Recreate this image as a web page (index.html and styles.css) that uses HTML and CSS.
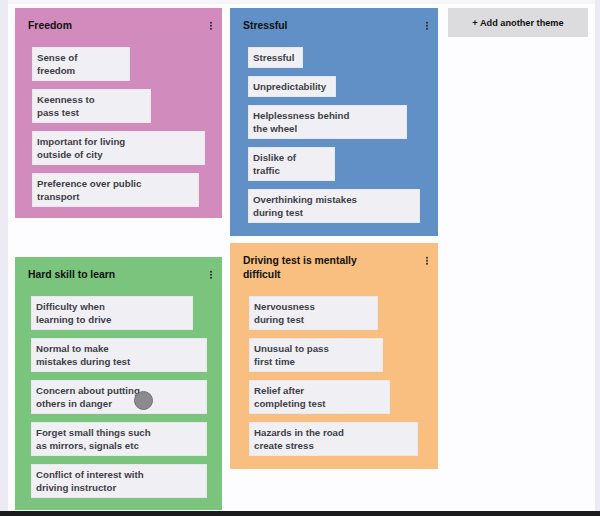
FILE: index.html
```html
<!DOCTYPE html>
<html>
<head>
<meta charset="utf-8">
<link rel="stylesheet" href="styles.css">
</head>
<body>
<div class="screen">
  <div class="main">
    <div class="strip-left"></div>
    <div class="board">
      <div class="col col-1">
        <section class="card pink">
          <header class="card-head"><h2 class="title">Freedom</h2><svg class="kebab" viewBox="0 0 4 10" width="4" height="10"><circle cx="2" cy="1.7" r="1"/><circle cx="2" cy="4.7" r="1"/><circle cx="2" cy="7.7" r="1"/></svg></header>
          <div class="items off-17">
            <div class="note" style="width:98px">Sense of<br>freedom</div>
            <div class="note" style="width:119px">Keenness to<br>pass test</div>
            <div class="note" style="width:173px">Important for living<br>outside of city</div>
            <div class="note" style="width:167px">Preference over public<br>transport</div>
          </div>
        </section>
        <section class="card green second-1">
          <header class="card-head"><h2 class="title">Hard skill to learn</h2><svg class="kebab" viewBox="0 0 4 10" width="4" height="10"><circle cx="2" cy="1.7" r="1"/><circle cx="2" cy="4.7" r="1"/><circle cx="2" cy="7.7" r="1"/></svg></header>
          <div class="items off-16">
            <div class="note" style="width:162px">Difficulty when<br>learning to drive</div>
            <div class="note" style="width:176px">Normal to make<br>mistakes during test</div>
            <div class="note" style="width:176px">Concern about putting<br>others in danger</div>
            <div class="note" style="width:176px">Forget small things such<br>as mirrors, signals etc</div>
            <div class="note" style="width:176px">Conflict of interest with<br>driving instructor</div>
          </div>
        </section>
      </div>
      <div class="col col-2">
        <section class="card blue">
          <header class="card-head"><h2 class="title">Stressful</h2><svg class="kebab" viewBox="0 0 4 10" width="4" height="10"><circle cx="2" cy="1.7" r="1"/><circle cx="2" cy="4.7" r="1"/><circle cx="2" cy="7.7" r="1"/></svg></header>
          <div class="items off-18">
            <div class="note" style="width:55px">Stressful</div>
            <div class="note" style="width:88px">Unpredictability</div>
            <div class="note" style="width:159px">Helplessness behind<br>the wheel</div>
            <div class="note" style="width:87px">Dislike of<br>traffic</div>
            <div class="note" style="width:172px">Overthinking mistakes<br>during test</div>
          </div>
        </section>
        <section class="card orange second-2">
          <header class="card-head"><h2 class="title">Driving test is mentally<br>difficult</h2><svg class="kebab" viewBox="0 0 4 10" width="4" height="10"><circle cx="2" cy="1.7" r="1"/><circle cx="2" cy="4.7" r="1"/><circle cx="2" cy="7.7" r="1"/></svg></header>
          <div class="items off-19">
            <div class="note" style="width:129px">Nervousness<br>during test</div>
            <div class="note" style="width:134px">Unusual to pass<br>first time</div>
            <div class="note" style="width:141px">Relief after<br>completing test</div>
            <div class="note" style="width:169px">Hazards in the road<br>create stress</div>
          </div>
        </section>
      </div>
      <div class="col col-3">
        <button class="add-theme">+ Add another theme</button>
      </div>
    </div>
    <div class="strip-right"></div>
  </div>
  <div class="bottom-bar"></div>
  <div class="touch-cursor"></div>
</div>
</body>
</html>
```

FILE: styles.css
```css
* { box-sizing: border-box; }
html, body { margin: 0; padding: 0; }
body {
  font-family: "Liberation Sans", Arial, sans-serif;
  background: #fdfcfe;
}
.screen {
  position: relative;
  width: 600px;
  height: 516px;
  display: flex;
  flex-direction: column;
  overflow: hidden;
  background: #fdfcfe;
}
.main {
  flex: 1;
  min-height: 0;
  display: flex;
  overflow: hidden;
}
.strip-left {
  width: 8px;
  flex: none;
  background: #ecebf3;
}
.strip-right {
  width: 5px;
  flex: none;
  background: #ecebf3;
}
.board {
  flex: 1;
  display: flex;
  align-items: flex-start;
  padding: 8px 0 0 7px;
  background: linear-gradient(#f6f5f8 0 4px, #fdfcfe 4px);
}
.col { display: flex; flex-direction: column; }
.col-1 { width: 207px; }
.col-2 { width: 208px; margin-left: 8px; }
.col-3 { width: 140px; margin-left: 10px; }
.second-1 { margin-top: 39px; }
.second-2 { margin-top: 7px; }
.card {
  padding: 11px 11px 12px 13px;
}
.pink { background: #d28bbd; padding-bottom: 11px; }
.blue { background: #6090c5; padding-bottom: 13px; }
.green { background: #7bc47e; }
.orange { background: #f8bf80; padding-bottom: 13px; }
.card-head {
  display: flex;
  justify-content: space-between;
  align-items: flex-start;
}
.title {
  margin: 0;
  font-size: 10.4px;
  line-height: 14px;
  font-weight: bold;
  color: #111;
}
.kebab {
  fill: #2a2a2a;
  margin-top: 2px;
  margin-right: -2px;
}
.items {
  display: flex;
  flex-direction: column;
  align-items: flex-start;
  gap: 8px;
  margin-top: 14px;
}
.off-16 { padding-left: 3px; }
.off-17 { padding-left: 4px; }
.off-18 { padding-left: 5px; }
.off-19 { padding-left: 6px; }
.note {
  background: #f0eff4;
  border: 1px solid #e9e8ee;
  padding: 3px 4px 3px 4px;
  font-size: 9.7px;
  line-height: 13px;
  font-weight: bold;
  color: #3e3e46;
  white-space: nowrap;
}
.add-theme {
  display: block;
  width: 140px;
  height: 29px;
  border: none;
  background: #dcdbdd;
  font-family: "Liberation Sans", Arial, sans-serif;
  font-size: 9.2px;
  font-weight: bold;
  color: #111;
  padding: 0;
}
.bottom-bar {
  height: 5px;
  flex: none;
  background: #1c1c1e;
}
.touch-cursor {
  position: absolute;
  left: 134px;
  top: 391px;
  width: 19px;
  height: 19px;
  border-radius: 50%;
  background: #8a8a8f;
  border: 1px solid #707074;
}
```
